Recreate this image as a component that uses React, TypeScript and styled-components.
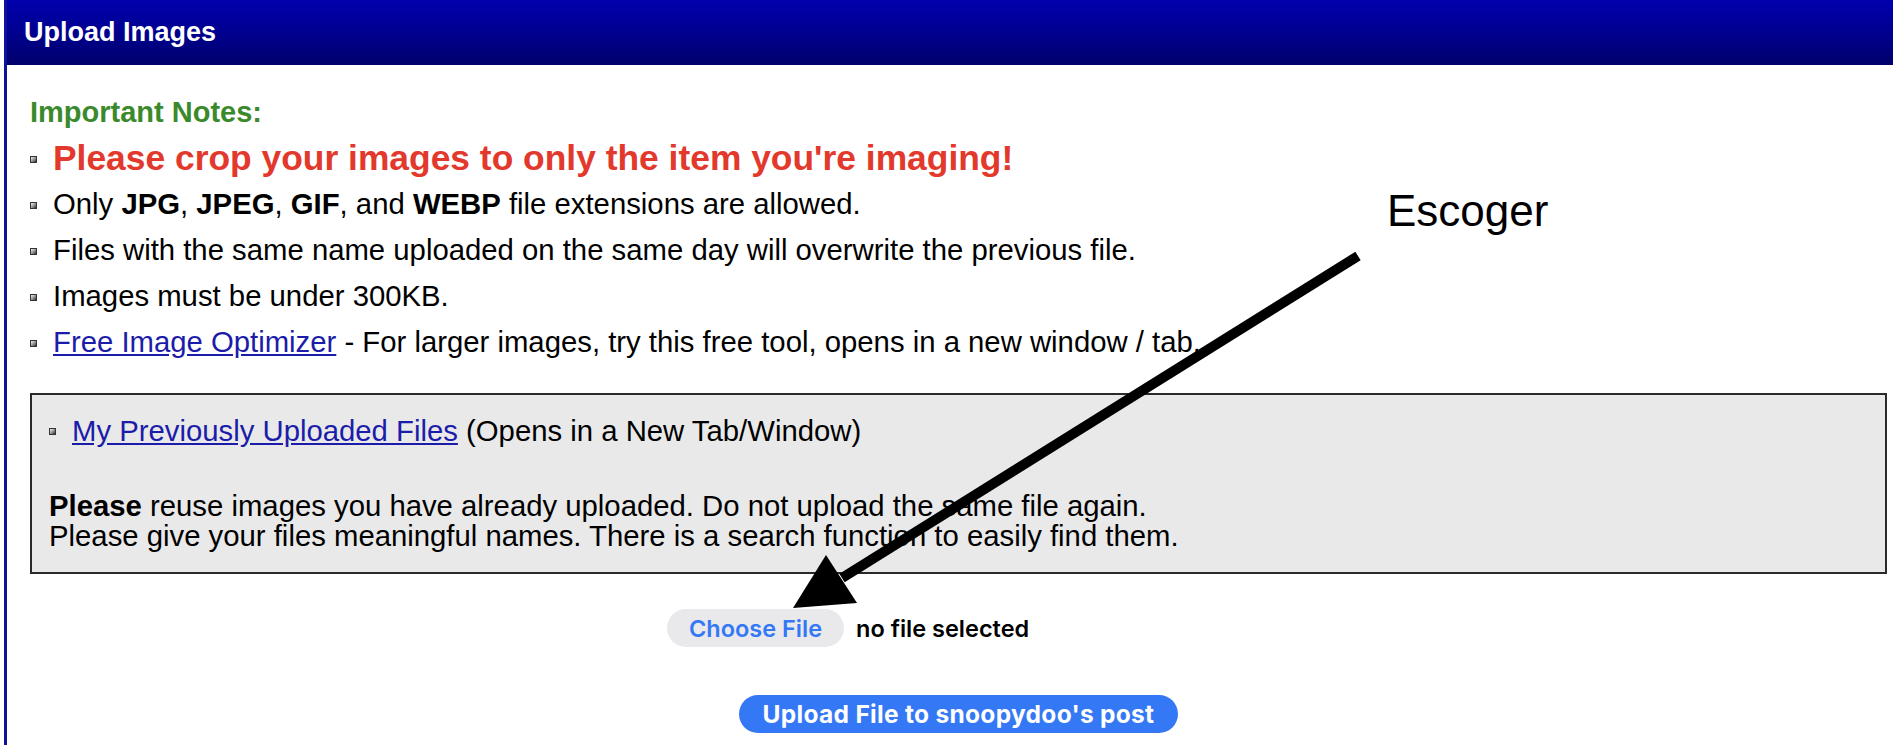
import React from "react";
import styled, { createGlobalStyle } from "styled-components";

const GlobalStyle = createGlobalStyle`
  html, body {
    margin: 0;
    padding: 0;
    overflow: hidden;
    background: #ffffff;
  }
  body {
    font-family: "Liberation Sans", Arial, sans-serif;
    color: #000;
  }
`;

const notes = [
  { id: "ext", kind: "ext" },
  { id: "same", text: "Files with the same name uploaded on the same day will overwrite the previous file." },
  { id: "size", text: "Images must be under 300KB." },
  { id: "opt", kind: "opt" },
];

const App = () => {
  return (
    <>
      <GlobalStyle />
      <Page>
        <Panel>
          <Header>
            <Title>Upload Images</Title>
          </Header>
          <Body>
            <NotesTitle>Important Notes:</NotesTitle>
            <List>
              <Item $big>Please crop your images to only the item you're imaging!</Item>
              {notes.map((n) => {
                if (n.kind === "ext") {
                  return (
                    <Item key={n.id}>
                      <span>
                        Only <b>JPG</b>, <b>JPEG</b>, <b>GIF</b>, and <b>WEBP</b> file extensions are allowed.
                      </span>
                    </Item>
                  );
                }
                if (n.kind === "opt") {
                  return (
                    <Item key={n.id}>
                      <span>
                        <Link href="#">Free Image Optimizer</Link> - For larger images, try this free tool, opens in
                        a new window / tab.
                      </span>
                    </Item>
                  );
                }
                return <Item key={n.id}>{n.text}</Item>;
              })}
            </List>

            <InfoBox>
              <BoxItem>
                <span>
                  <Link href="#">My Previously Uploaded Files</Link> (Opens in a New Tab/Window)
                </span>
              </BoxItem>
              <BoxText>
                <b>Please</b> reuse images you have already uploaded. Do not upload the same file again.
                <br />
                Please give your files meaningful names. There is a search function to easily find them.
              </BoxText>
            </InfoBox>

            <UploadArea>
              <FileInput>
                <ChooseBtn type="button">Choose File</ChooseBtn>
                <FileName>no file selected</FileName>
              </FileInput>
              <UploadBtn type="button">Upload File to snoopydoo's post</UploadBtn>
            </UploadArea>
          </Body>
        </Panel>

        <Caption>Escoger</Caption>
        <Arrow viewBox="0 0 1893 745" width="1893" height="745">
          <line x1="1358" y1="256" x2="842" y2="578" stroke="#000" strokeWidth="10" />
          <polygon points="793,608 826,555 857,603" fill="#000" />
        </Arrow>
      </Page>
    </>
  );
};

const Page = styled.div`
  position: relative;
  width: 1893px;
  height: 745px;
  overflow: hidden;
`;

const Panel = styled.div`
  margin-left: 4px;
  width: 1909px;
  min-height: 745px;
  box-sizing: border-box;
  border-left: 3px solid #10109e;
  border-right: 3px solid #10109e;
`;

const Header = styled.div`
  display: flex;
  align-items: center;
  height: 65px;
  padding-left: 17px;
  background: linear-gradient(to bottom, #0000ae 0%, #00008c 55%, #00006a 100%);
`;

const Title = styled.div`
  color: #ffffff;
  font-size: 27px;
  font-weight: bold;
`;

const Body = styled.div`
  padding: 24px 23px 0 23px;
`;

const NotesTitle = styled.div`
  color: #3a8a2c;
  font-size: 29px;
  font-weight: bold;
  line-height: 46px;
`;

const List = styled.ul`
  margin: 0;
  padding: 0;
  list-style: none;
`;

const Bullet = `
  content: "";
  flex: none;
  width: 7px;
  height: 7px;
  margin-right: 16px;
  margin-top: 2px;
  box-sizing: border-box;
  border: 1px solid #333333;
  background: linear-gradient(135deg, #f4f4f4 0%, #9a9a9a 50%, #2e2e2e 100%);
`;

const Item = styled.li<{ $big?: boolean }>`
  display: flex;
  align-items: center;
  line-height: 46px;
  font-size: ${({ $big }) => ($big ? "35.4px" : "29.3px")};
  font-weight: ${({ $big }) => ($big ? "bold" : "normal")};
  color: ${({ $big }) => ($big ? "#e2392c" : "#000")};
  white-space: nowrap;

  &::before {
    ${Bullet}
  }
`;

const Link = styled.a`
  color: #1c1caa;
  text-decoration: underline;
`;

const InfoBox = styled.div`
  margin-top: 28px;
  padding: 22px 17px 21px 17px;
  border: 2px solid #2a2a2a;
  background: #e9e9e9;
  font-size: 29.3px;
  line-height: 27px;
`;

const BoxItem = styled.div`
  display: flex;
  align-items: center;

  &::before {
    ${Bullet}
  }
`;

const BoxText = styled.div`
  margin-top: 47px;
  line-height: 30px;
`;

const UploadArea = styled.div`
  display: flex;
  flex-direction: column;
  align-items: center;
  padding-top: 35px;
`;

const FileInput = styled.div`
  display: flex;
  align-items: center;
  gap: 12px;
  width: 583px;
`;

const PillBtn = styled.button`
  height: 38px;
  padding: 0 22px;
  border: none;
  border-radius: 19px;
  font-family: Inter, "Noto Sans", sans-serif;
  cursor: pointer;
`;

const ChooseBtn = styled(PillBtn)`
  background: #e9e9eb;
  color: #3478f6;
  font-size: 23.5px;
  font-weight: 600;
`;

const FileName = styled.span`
  font-family: Inter, "Noto Sans", sans-serif;
  font-size: 23.5px;
  font-weight: 600;
  color: #000;
`;

const UploadBtn = styled(PillBtn)`
  margin-top: 48px;
  padding: 0 24px;
  background: #3478f6;
  color: #ffffff;
  font-size: 24.5px;
  font-weight: 700;
  letter-spacing: 0.3px;
`;

const Caption = styled.div`
  position: absolute;
  left: 1387px;
  top: 189px;
  font-size: 44px;
  line-height: 1;
  color: #000;
`;

const Arrow = styled.svg`
  position: absolute;
  left: 0;
  top: 0;
  pointer-events: none;
`;

export default App;
